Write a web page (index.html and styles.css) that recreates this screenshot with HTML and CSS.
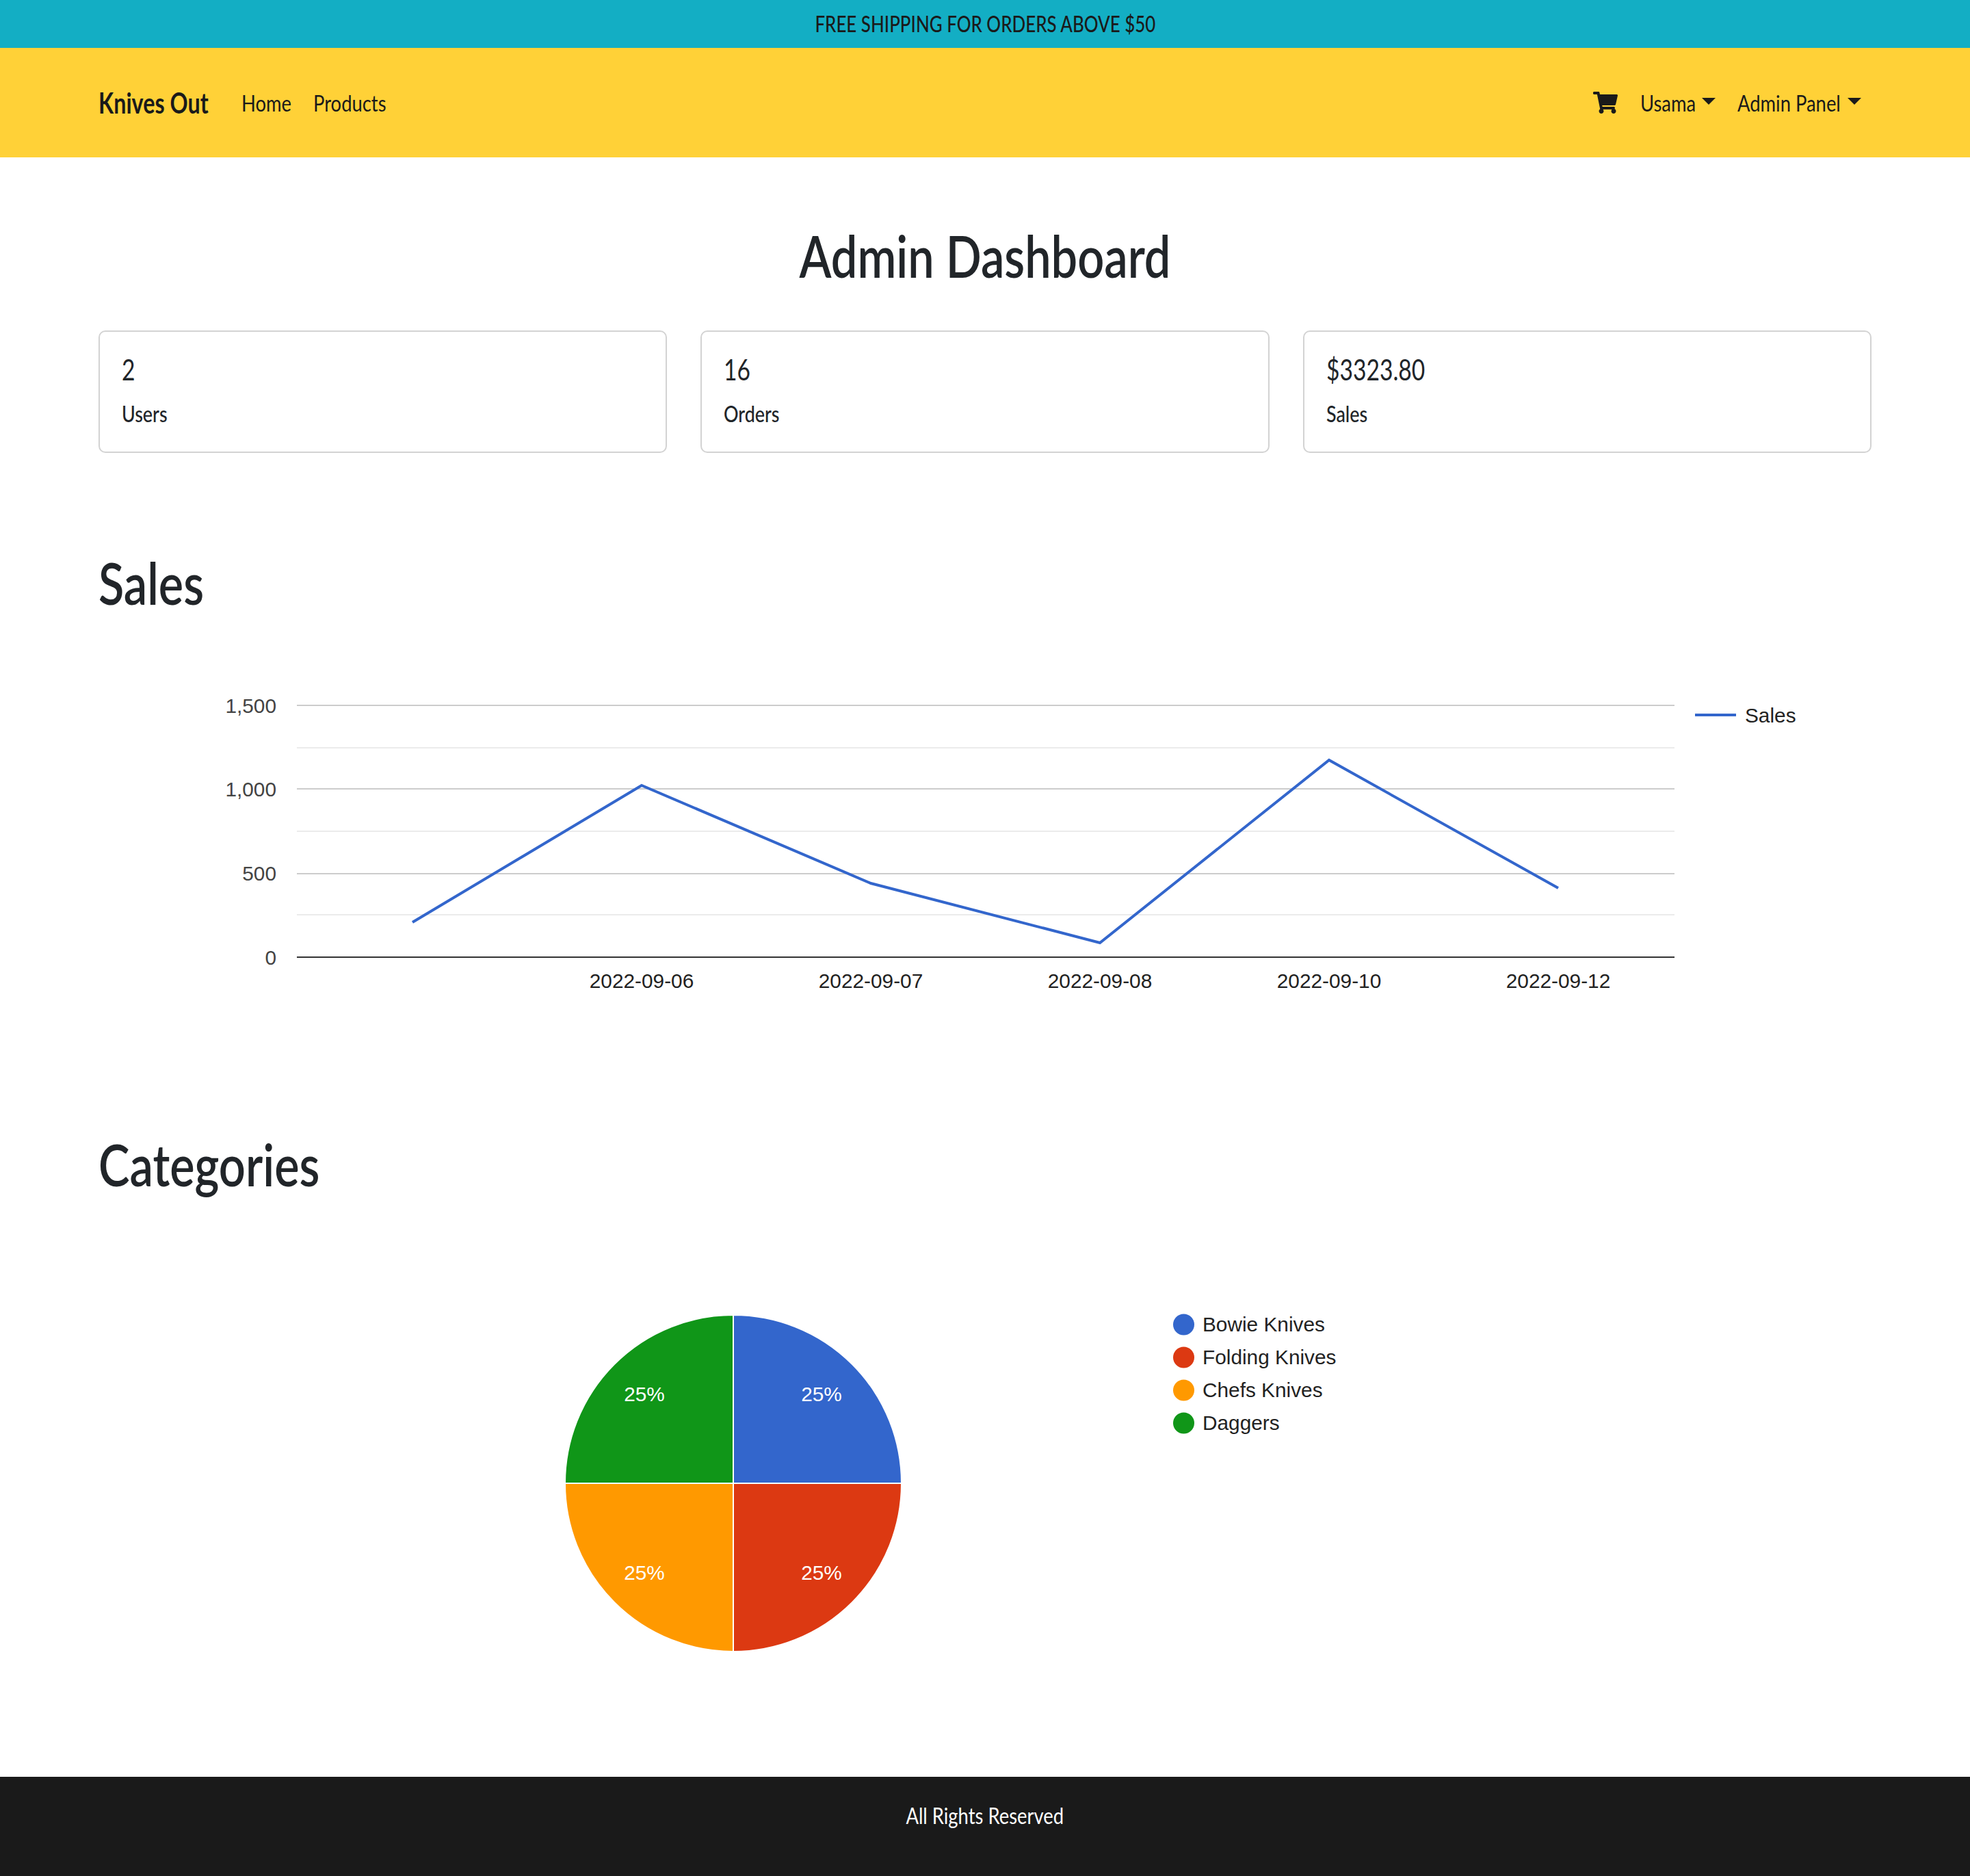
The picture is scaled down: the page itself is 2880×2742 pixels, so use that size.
FILE: index.html
```html
<!DOCTYPE html>
<html lang="en">
<head>
    <meta charset="UTF-8">
    <title>Admin Dashboard</title>
    <link rel="stylesheet" href="styles.css">
</head>
<body>
    <div class="promo"><span class="promo-text">FREE SHIPPING FOR ORDERS ABOVE $50</span></div>

    <nav class="navbar">
        <a class="brand" href="#"><span class="brand-text">Knives Out</span></a>
        <a class="nav-link nav-home" href="#"><span class="link-text">Home</span></a>
        <a class="nav-link nav-products" href="#"><span class="link-text">Products</span></a>
        <div class="nav-right">
            <a class="cart" href="#" aria-label="Cart">
                <svg viewBox="0 0 576 512" width="36" height="32"><path fill="#1a1a1a" d="M528.12 301.319l47.273-208C578.806 78.301 567.391 64 551.99 64H159.208l-9.166-44.81C147.758 8.021 137.93 0 126.529 0H24C10.745 0 0 10.745 0 24v16c0 13.255 10.745 24 24 24h69.883l70.248 343.435C147.325 417.1 136 435.222 136 456c0 30.928 25.072 56 56 56s56-25.072 56-56c0-15.674-6.447-29.835-16.824-40h209.647C430.447 426.165 424 440.326 424 456c0 30.928 25.072 56 56 56s56-25.072 56-56c0-22.172-12.888-41.332-31.579-50.405l5.517-24.276c3.413-15.018-8.002-29.319-23.403-29.319H218.117l-6.545-32h293.145c11.206 0 20.92-7.754 23.403-18.681z"/></svg>
            </a>
            <a class="nav-link nav-usama dropdown" href="#"><span class="link-text">Usama</span></a>
            <a class="nav-link nav-admin dropdown" href="#"><span class="link-text">Admin Panel</span></a>
        </div>
    </nav>

    <main class="container">
        <h1 class="page-title">Admin Dashboard</h1>

        <div class="stats">
            <div class="card">
                <div class="card-value">2</div>
                <div class="card-label">Users</div>
            </div>
            <div class="card">
                <div class="card-value">16</div>
                <div class="card-label">Orders</div>
            </div>
            <div class="card">
                <div class="card-value">$3323.80</div>
                <div class="card-label">Sales</div>
            </div>
        </div>

        <h2 class="section-title sales-title">Sales</h2>

        <svg class="chart line-chart" viewBox="144 932 2592 600">
            <g class="grid-minor">
                <line x1="434" x2="2448" y1="1093" y2="1093"/>
                <line x1="434" x2="2448" y1="1215" y2="1215"/>
                <line x1="434" x2="2448" y1="1337" y2="1337"/>
            </g>
            <g class="grid-major">
                <line x1="434" x2="2448" y1="1031" y2="1031"/>
                <line x1="434" x2="2448" y1="1153" y2="1153"/>
                <line x1="434" x2="2448" y1="1277" y2="1277"/>
            </g>
            <line class="axis" x1="434" x2="2448" y1="1399" y2="1399"/>
            <polyline class="series" points="603,1348 938,1148 1273,1291 1608,1378 1943,1111 2278,1298"/>

            <g class="y-labels">
                <text x="404" y="1042">1,500</text>
                <text x="404" y="1164">1,000</text>
                <text x="404" y="1287">500</text>
                <text x="404" y="1410">0</text>
            </g>
            <g class="x-labels">
                <text x="938" y="1444">2022-09-06</text>
                <text x="1273" y="1444">2022-09-07</text>
                <text x="1608" y="1444">2022-09-08</text>
                <text x="1943" y="1444">2022-09-10</text>
                <text x="2278" y="1444">2022-09-12</text>
            </g>

            <line class="series" x1="2478" x2="2538" y1="1045" y2="1045"/>
            <text class="legend-text" x="2551" y="1056">Sales</text>
        </svg>

        <h2 class="section-title categories-title">Categories</h2>

        <svg class="chart pie-chart" viewBox="144 1800 2592 720">
            <g class="slices">
                <path fill="#3366cc" d="M1072 2168V1922A246 246 0 0 1 1318 2168Z"/>
                <path fill="#dc3912" d="M1072 2168H1318A246 246 0 0 1 1072 2414Z"/>
                <path fill="#ff9900" d="M1072 2168V2414A246 246 0 0 1 826 2168Z"/>
                <path fill="#109618" d="M1072 2168H826A246 246 0 0 1 1072 1922Z"/>
            </g>
            <g class="pie-labels">
                <text x="1201" y="2048">25%</text>
                <text x="1201" y="2309">25%</text>
                <text x="942" y="2309">25%</text>
                <text x="942" y="2048">25%</text>
            </g>

            <circle cx="1730.5" cy="1936" r="15.5" fill="#3366cc"/>
            <circle cx="1730.5" cy="1984" r="15.5" fill="#dc3912"/>
            <circle cx="1730.5" cy="2032" r="15.5" fill="#ff9900"/>
            <circle cx="1730.5" cy="2080" r="15.5" fill="#109618"/>
            <text class="legend-text" x="1758" y="1946">Bowie Knives</text>
            <text class="legend-text" x="1758" y="1994">Folding Knives</text>
            <text class="legend-text" x="1758" y="2042">Chefs Knives</text>
            <text class="legend-text" x="1758" y="2090">Daggers</text>
        </svg>
    </main>

    <footer class="footer"><span class="footer-text">All Rights Reserved</span></footer>
</body>
</html>
```

FILE: styles.css
```css
/* Lato is much wider than the site's font, so text gets squeezed with scaleX */
body {
    margin: 0;
    padding: 0;
    font-family: "Lato", sans-serif;
    color: #212529;
    background-color: #fff;
}

a {
    color: #1a1a1a;
    text-decoration: none;
}

.promo {
    height: 70px;
    line-height: 70px;
    text-align: center;
    font-size: 32px;
    font-weight: 500;
    color: #1a1a1a;
    background-color: #13aec4;
}

.promo-text {
    display: inline-block;
    transform: scaleX(0.81);
}

.footer-text {
    display: inline-block;
    transform: scaleX(0.856);
}

.navbar {
    display: flex;
    align-items: center;
    height: 160px;
    padding: 0 144px;
    background-color: #ffd137;
}

.brand {
    width: 160px;
    margin-right: 49px;
    font-size: 42px;
    font-weight: 700;
    white-space: nowrap;
}

.brand-text {
    display: inline-block;
    transform: scaleX(0.77);
    transform-origin: left;
}

.nav-link {
    display: flex;
    align-items: center;
    font-size: 33px;
    white-space: nowrap;
}

.link-text {
    display: block;
    transform: scaleX(0.83);
    transform-origin: left;
}

.nav-home {
    width: 105px;
}

.nav-products {
    width: 107px;
}

.nav-right {
    display: flex;
    align-items: center;
    margin-left: auto;
    padding-right: 16px;
}

.cart {
    display: flex;
    margin-right: 33px;
}

.nav-usama {
    width: 109px;
    margin-right: 33px;
}

.nav-admin {
    width: 180px;
}

.nav-usama .link-text {
    width: 90px;
}

.nav-admin .link-text {
    width: 161px;
}

.dropdown::after {
    content: '';
    border-top: 10px solid #1a1a1a;
    border-left: 10px solid transparent;
    border-right: 10px solid transparent;
    margin-top: -4px;
    flex: none;
}

.container {
    padding: 0 144px;
}

.page-title {
    margin: 96px 0 61px;
    font-size: 84px;
    line-height: 96px;
    font-weight: 600;
    text-align: center;
    transform: scaleX(0.815);
}

.stats {
    display: grid;
    grid-template-columns: repeat(3, 1fr);
    gap: 49px;
}

.card {
    height: 179px;
    box-sizing: border-box;
    padding: 27px 32px;
    border: 2px solid #d3d3d3;
    border-radius: 10px;
}

.card-value {
    font-size: 42px;
    line-height: 56px;
    transform: scaleX(0.8);
    transform-origin: left;
}

.card-label {
    margin-top: 13px;
    font-size: 32px;
    line-height: 48px;
    font-weight: 500;
    transform: scaleX(0.84);
    transform-origin: left;
}

.section-title {
    margin: 0;
    font-size: 84px;
    line-height: 96px;
    font-weight: 600;
    transform: scaleX(0.815);
    transform-origin: left;
}

.sales-title {
    margin-top: 142px;
}

.categories-title {
    margin-top: 122px;
}

.chart {
    display: block;
    width: 2592px;
}

.line-chart {
    height: 600px;
    margin-top: 32px;
}

.pie-chart {
    height: 720px;
    margin-top: 50px;
    margin-bottom: 77px;
}

.chart text {
    font-family: "Liberation Sans", Arial, sans-serif;
    font-size: 29.8px;
}

.grid-minor line {
    stroke: #ebebeb;
    stroke-width: 2;
}

.grid-major line {
    stroke: #cccccc;
    stroke-width: 2;
}

.axis {
    stroke: #333;
    stroke-width: 2;
}

.series {
    fill: none;
    stroke: #3366cc;
    stroke-width: 4;
}

.y-labels text {
    fill: #444;
    text-anchor: end;
}

.x-labels text {
    fill: #222;
    text-anchor: middle;
}

.legend-text {
    fill: #222;
}

.slices path {
    stroke: #fff;
    stroke-width: 2;
}

.pie-labels text {
    fill: #fff;
    text-anchor: middle;
}

.footer {
    height: 145px;
    box-sizing: border-box;
    padding-top: 33px;
    font-size: 32px;
    line-height: 48px;
    text-align: center;
    color: #fff;
    background-color: #1a1a1a;
}
```
